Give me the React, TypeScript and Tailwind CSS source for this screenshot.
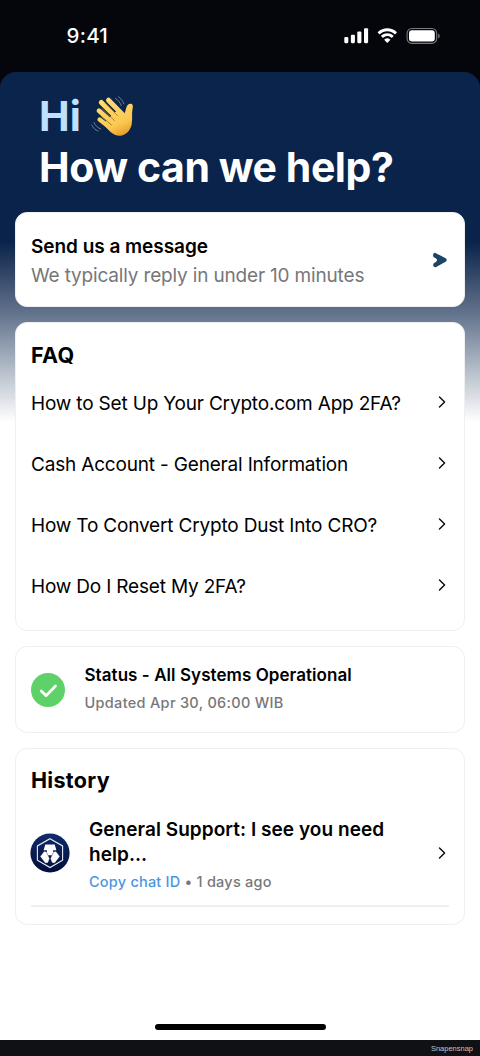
import type { ReactNode } from "react";

const faqs = [
  "How to Set Up Your Crypto.com App 2FA?",
  "Cash Account - General Information",
  "How To Convert Crypto Dust Into CRO?",
  "How Do I Reset My 2FA?",
];

const Card = ({ className = "", children }: { className?: string; children: ReactNode }) => (
  <section className={`rounded-xl border border-[#efeff0] bg-white px-[15px] ${className}`}>{children}</section>
);

const Chevron = () => (
  <svg className="mr-[3px] shrink-0" width="8" height="12" viewBox="0 0 8 12" fill="none">
    <path d="M1.5 1 6.6 6 1.5 11" stroke="#0a0a0a" strokeWidth="1.4" strokeLinecap="round" strokeLinejoin="round" />
  </svg>
);

const WavingHand = () => (
  <svg width="44" height="44" viewBox="0 0 44 44" fill="none">
    <defs>
      <linearGradient id="hand" x1="12" y1="4" x2="30" y2="42" gradientUnits="userSpaceOnUse">
        <stop stopColor="#ffdf72" />
        <stop offset="0.7" stopColor="#fbc84f" />
        <stop offset="1" stopColor="#e59b2d" />
      </linearGradient>
    </defs>
    <g stroke="url(#hand)" strokeLinecap="round">
      <path d="M17.5 5.2 31 19" strokeWidth="5" />
      <path d="M10.3 7.4 27 24" strokeWidth="5" />
      <path d="M8 15.8 24 30" strokeWidth="4.8" />
      <path d="M8.6 24.6 22 35" strokeWidth="4.4" />
    </g>
    <path
      d="M14 27 27 14.5 32 19.5C34 19 34.5 15.5 35.3 12.8 36.2 9.8 38 8.3 40 8.8 42.4 9.4 42 12 41.5 14.5 40.6 18.5 41.6 23 40.8 28.5 40 35 35 40.5 29 40.7 23 41 18 36 14 31Z"
      fill="url(#hand)"
    />
    <path d="m14.2 8 12 12.4M11 13.6 23.5 25.6M10.5 21.8 20.5 30" stroke="#a8732f" strokeWidth="1" strokeLinecap="round" opacity="0.85" />
    <path d="M24.5 3.5C27 4.8 29 7.3 30.3 10.5M27.5 1.8C30 3.4 31.8 5.8 32.8 8.8M3 27.5C4.3 30.7 6.6 32.8 9.8 34M.8 30C2 33 4.2 35 7.2 36" stroke="#6d7f91" strokeWidth="1" strokeLinecap="round" />
  </svg>
);

const StatusBar = () => (
  <header className="flex h-[72px] items-center justify-between pr-10 pl-[66.5px] text-white">
    <span className="text-[20.5px] leading-6 font-medium tracking-[0.25px]">9:41</span>
    <svg width="96" height="16" viewBox="0 0 96 16" fill="none">
      <rect x="0.3" y="9" width="4" height="6.2" rx="1.1" fill="#fff" />
      <rect x="6.9" y="6.7" width="4" height="8.5" rx="1.1" fill="#fff" />
      <rect x="13.3" y="3.5" width="4.1" height="11.7" rx="1.1" fill="#fff" />
      <rect x="20" y="0.2" width="4.1" height="15" rx="1.1" fill="#fff" />
      <path
        d="M43.3 3.2c2.8 0 5.4 1.1 7.4 3 .2.1.4.1.5 0l1.5-1.5c.2-.2.2-.4 0-.6a13.6 13.6 0 0 0-18.8 0c-.2.2-.2.4 0 .6l1.5 1.5c.1.1.4.1.5 0 2-1.9 4.6-3 7.4-3Zm0 4.9c1.5 0 2.9.6 4.1 1.6.1.2.4.2.5 0l1.5-1.5c.2-.2.2-.4 0-.6a8.9 8.9 0 0 0-12.2 0c-.2.2-.2.4 0 .6l1.5 1.5c.1.2.4.2.5 0a6 6 0 0 1 4.1-1.6Zm2.9 3.3c.2.2.2.4 0 .6l-2.6 2.8c-.2.2-.4.2-.6 0l-2.6-2.8c-.2-.2-.2-.4 0-.6a4.4 4.4 0 0 1 5.8 0Z"
        fill="#fff"
      />
      <rect x="63.1" y="0.55" width="29.6" height="14.8" rx="4.8" stroke="#77797f" strokeWidth="1.1" />
      <rect x="65" y="2.3" width="25.8" height="11.2" rx="3" fill="#fff" />
      <path d="M94.2 5.4c2 1 2 4 0 5Z" fill="#77797f" />
    </svg>
  </header>
);

const CheckBadge = () => (
  <svg className="shrink-0" width="34" height="34" viewBox="0 0 34 34" fill="none">
    <circle cx="17" cy="17" r="17" fill="#5ed168" />
    <path d="m10.2 18 5 4.6L24.5 13" stroke="#fff" strokeWidth="2.8" strokeLinecap="round" strokeLinejoin="round" />
  </svg>
);

const CryptoLogo = () => (
  <svg className="-ml-px shrink-0" width="40" height="40" viewBox="0 0 40 40" fill="none">
    <defs>
      <linearGradient id="logo" x1="20" y1="0" x2="20" y2="40" gradientUnits="userSpaceOnUse">
        <stop stopColor="#102c69" />
        <stop offset="1" stopColor="#020d3b" />
      </linearGradient>
    </defs>
    <circle cx="20" cy="20" r="19.6" fill="url(#logo)" />
    <path d="m20 5.7 12.6 7.2v14.4L20 34.5 7.4 27.3V12.9Z" stroke="#e8edf6" strokeWidth="1.1" />
    <path d="M15.3 11.6h9.4l1.7 5.6H13.6Z" fill="#fff" />
    <path d="M16.9 17h6.2v2.2l-1.2 3h-3.8l-1.2-3Z" fill="#fff" />
    <path d="m14.2 18.8 2.1.4 2.8 6.4-1.4 3.8-2.3.3-4.8-6.3Z" fill="#fff" stroke="#fff" strokeWidth="0.5" strokeLinejoin="round" />
    <path d="m25.8 18.8-2.1.4-2.8 6.4 1.4 3.8 2.3.3 4.8-6.3Z" fill="#fff" stroke="#fff" strokeWidth="0.5" strokeLinejoin="round" />
  </svg>
);

const SendArrow = () => (
  <svg className="mr-px shrink-0" width="16" height="16" viewBox="0 0 16 16">
    <path
      d="M3.4.9 13.6 6.2c1.5.8 1.5 2.8 0 3.6L4.2 14.9C2.5 15.7 1 14.300 1.2 12.6 1.4 11.300 2.2 10.9 3.2 10.4 4.400 9.8 5 9.200 5 8.1 5 7 4.400 6.500 3.2 5.900 1.8 5.200 1.1 4.8 1.1 3.4 1.1 1.6 2.100.5 3.4.9Z"
      fill="#1b4567"
    />
  </svg>
);

export default function App() {
  return (
    <div className="flex h-[1056px] w-[480px] flex-col overflow-hidden bg-[#05060b] font-['Inter','Liberation_Sans',sans-serif] whitespace-nowrap text-black">
      <StatusBar />

      <main className="flex h-[968px] flex-col rounded-t-[16px] bg-[linear-gradient(to_bottom,#0a244c_0px,#0a234a_170px,#66768f_244px,#a2adbb_285px,#ffffff_350px)] px-[15px]">
        <h1 className="h-[140px] pt-[19px] pl-6 text-[41px] leading-[51px] font-bold text-white">
          <div className="flex items-center gap-2.5 text-[#bfe0ff]">
            <span>Hi</span>
            <WavingHand />
          </div>
          <div className="tracking-[-0.45px]">How can we help?</div>
        </h1>

        <Card className="flex h-[95px] items-center justify-between">
          <div className="pt-0.5">
            <h2 className="text-[19px] leading-[29px] font-semibold tracking-[-0.04px]">Send us a message</h2>
            <p className="text-[19px] leading-[29px] tracking-[-0.17px] text-[#77777a]">We typically reply in under 10 minutes</p>
          </div>
          <SendArrow />
        </Card>

        <Card className="mt-[15px] h-[309px] pt-[17px]">
          <h2 className="text-[21.5px] leading-[30px] font-bold tracking-[0.3px]">FAQ</h2>
          <ul className="pt-px">
            {faqs.map((faq) => (
              <li key={faq} className="flex h-[61px] items-center justify-between text-[19px] tracking-[-0.18px]">
                <span className="pt-1.5">{faq}</span>
                <Chevron />
              </li>
            ))}
          </ul>
        </Card>

        <Card className="mt-[15px] flex h-[87px] items-center gap-[19.5px]">
          <CheckBadge />
          <div className="pb-0.5">
            <h3 className="text-[17px] leading-7 font-semibold tracking-[0.06px]">Status - All Systems Operational</h3>
            <p className="text-[14.5px] leading-7 font-medium tracking-[0.31px] text-[#77777a]">Updated Apr 30, 06:00 WIB</p>
          </div>
        </Card>

        <Card className="mt-[15px] h-[177px] pt-4">
          <h2 className="text-[21.5px] leading-[30px] font-bold tracking-[0.3px]">History</h2>
          <div className="flex h-[112px] items-center border-b-2 border-[#efeff0] pt-[5px]">
            <CryptoLogo />
            <div className="ml-[19px] flex-1 pt-2">
              <h3 className="text-[19px] leading-[25px] font-semibold tracking-[0.05px]">
                General Support: I see you need
                <br />
                help...
              </h3>
              <p className="text-[14.5px] leading-[30px] font-medium tracking-[0.22px] text-[#77777a]">
                <span className="text-[#4b96df]">Copy chat ID</span> • 1 days ago
              </p>
            </div>
            <Chevron />
          </div>
        </Card>

        <div className="mt-auto mb-2.5 h-1.5 w-[171px] self-center rounded-full bg-black" />
      </main>

      <footer className="flex h-4 items-center justify-end bg-[#101115] pt-0.5 pr-[7px] font-['Liberation_Sans',sans-serif] text-[7.5px] leading-none text-[#c4c4c8]">
        Snapensnap
      </footer>
    </div>
  );
}
